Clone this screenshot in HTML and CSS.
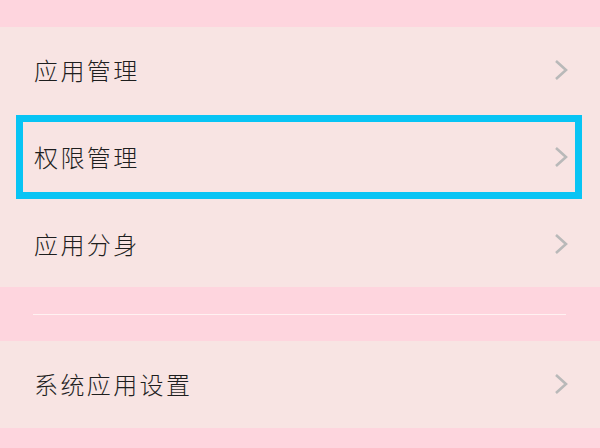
FILE: index.html
```html
<!DOCTYPE html>
<html lang="zh">
<head>
<meta charset="utf-8">
<link rel="stylesheet" href="styles.css">
</head>
<body>
<div class="page">
  <div class="top-gap"></div>
  <div class="panel">
    <div class="row"><span class="label">应用管理</span><svg class="chev" viewBox="0 0 14 22"><path d="M2 2 L12 11 L2 20" /></svg></div>
    <div class="row highlighted"><span class="label">权限管理</span><svg class="chev" viewBox="0 0 14 22"><path d="M2 2 L12 11 L2 20" /></svg></div>
    <div class="row"><span class="label">应用分身</span><svg class="chev" viewBox="0 0 14 22"><path d="M2 2 L12 11 L2 20" /></svg></div>
  </div>
  <div class="divider-gap"><div class="divider"></div></div>
  <div class="panel">
    <div class="row"><span class="label">系统应用设置</span><svg class="chev" viewBox="0 0 14 22"><path d="M2 2 L12 11 L2 20" /></svg></div>
  </div>
</div>
</body>
</html>
```
FILE: styles.css
```css
html, body {
  margin: 0;
  padding: 0;
  background: #fed5de;
  width: 600px;
  height: 448px;
  overflow: hidden;
  font-family: "Noto Sans CJK SC", "Noto Sans", sans-serif;
}
.page {
  display: flex;
  flex-direction: column;
}
.top-gap {
  height: 27px;
}
.panel {
  background: #f8e4e3;
  display: flex;
  flex-direction: column;
}
.row {
  height: 86.7px;
  display: flex;
  align-items: center;
  justify-content: space-between;
  padding: 0 32px 0 34px;
  position: relative;
}
.label {
  font-size: 24px;
  font-weight: 300;
  letter-spacing: 2.4px;
  color: #1e1e1e;
  line-height: 1;
}
.chev {
  width: 14px;
  height: 22px;
  fill: none;
  stroke: #b9b9b9;
  stroke-width: 2.6;
}
.highlighted::after {
  content: "";
  position: absolute;
  left: 16px;
  right: 18px;
  top: 1px;
  bottom: 1px;
  border: 7px solid #08c4f4;
}
.divider-gap {
  height: 54px;
  display: flex;
  align-items: center;
  padding: 0 34px 0 33px;
}
.divider {
  flex: 1;
  height: 1px;
  background: #fff2f2;
}
```
